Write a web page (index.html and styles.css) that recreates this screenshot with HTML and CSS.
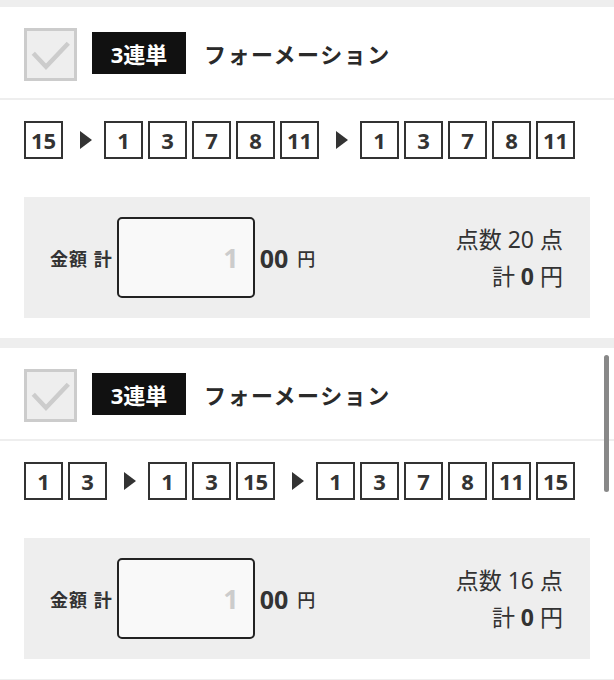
FILE: index.html
```html
<!DOCTYPE html>
<html lang="ja">
<head>
<meta charset="utf-8">
<title>3連単 フォーメーション</title>
<link rel="stylesheet" href="styles.css">
</head>
<body>
<div class="list">
  <section class="card">
    <div class="head">
      <span class="check"><svg viewBox="0 0 47 47" width="47" height="47"><polyline points="6.3,22.3 19,35.7 41.3,12.3" fill="none" stroke="#cccccc" stroke-width="4.5"/></svg></span>
      <span class="tag">3連単</span>
      <span class="kind">フォーメーション</span>
    </div>
    <div class="picks">
      <span class="num">15</span>
      <span class="arrow"></span>
      <span class="num">1</span><span class="num">3</span><span class="num">7</span><span class="num">8</span><span class="num">11</span>
      <span class="arrow"></span>
      <span class="num">1</span><span class="num">3</span><span class="num">7</span><span class="num">8</span><span class="num">11</span>
    </div>
    <div class="panel">
      <div class="amount">
        <span class="amount-label">金額 計</span>
        <span class="input">1</span>
        <span class="zeros">00</span>
        <span class="yen">円</span>
      </div>
      <div class="summary">
        <div>点数 20 点</div>
        <div>計 <b>0</b> 円</div>
      </div>
    </div>
  </section>
  <section class="card">
    <div class="head">
      <span class="check"><svg viewBox="0 0 47 47" width="47" height="47"><polyline points="6.3,22.3 19,35.7 41.3,12.3" fill="none" stroke="#cccccc" stroke-width="4.5"/></svg></span>
      <span class="tag">3連単</span>
      <span class="kind">フォーメーション</span>
    </div>
    <div class="picks">
      <span class="num">1</span><span class="num">3</span>
      <span class="arrow"></span>
      <span class="num">1</span><span class="num">3</span><span class="num">15</span>
      <span class="arrow"></span>
      <span class="num">1</span><span class="num">3</span><span class="num">7</span><span class="num">8</span><span class="num">11</span><span class="num">15</span>
    </div>
    <div class="panel">
      <div class="amount">
        <span class="amount-label">金額 計</span>
        <span class="input">1</span>
        <span class="zeros">00</span>
        <span class="yen">円</span>
      </div>
      <div class="summary">
        <div>点数 16 点</div>
        <div>計 <b>0</b> 円</div>
      </div>
    </div>
  </section>
</div>
<div class="scrollbar"></div>
</body>
</html>
```
FILE: styles.css
```css
html, body {
  margin: 0;
  padding: 0;
}
body {
  background: #eeeeee;
  font-family: "Noto Sans", "Noto Sans CJK JP", sans-serif;
  color: #333333;
  width: 614px;
  height: 680px;
  overflow: hidden;
  position: relative;
}
.list {
  padding-top: 7px;
  display: flex;
  flex-direction: column;
  gap: 10px;
}
.card {
  background: #ffffff;
  padding-bottom: 20px;
}
.head {
  height: 91px;
  border-bottom: 2px solid #eeeeee;
  display: flex;
  align-items: center;
  padding-left: 24px;
}
.check {
  width: 47px;
  height: 47px;
  border: 3px solid #cccccc;
  background: #eeeeee;
  display: block;
  margin-top: 3px;
}
.check svg {
  display: block;
}
.tag {
  margin-left: 15px;
  width: 94px;
  height: 42px;
  background: #111111;
  color: #ffffff;
  font-weight: 700;
  font-size: 22px;
  display: flex;
  align-items: center;
  justify-content: center;
}
.kind {
  margin-left: 18px;
  font-size: 22px;
  font-weight: 700;
  letter-spacing: 1.5px;
  color: #2a2a2a;
}
.picks {
  display: flex;
  align-items: center;
  gap: 5px;
  padding: 21px 24px 38px;
}
.num {
  box-sizing: border-box;
  width: 39px;
  height: 38px;
  border: 2px solid #333333;
  display: flex;
  align-items: center;
  justify-content: center;
  font-size: 22px;
  font-weight: 700;
  color: #333333;
}
.arrow {
  width: 0;
  height: 0;
  border-top: 9.5px solid transparent;
  border-bottom: 9.5px solid transparent;
  border-left: 12px solid #333333;
  margin: 0 7px 0 12px;
}
.panel {
  margin: 0 24px;
  height: 121px;
  background: #eeeeee;
  display: flex;
  align-items: center;
  justify-content: space-between;
  padding: 0 27px 0 26px;
}
.amount {
  display: flex;
  align-items: center;
}
.amount-label {
  font-size: 18px;
  font-weight: 700;
  letter-spacing: 1px;
  color: #333333;
}
.input {
  box-sizing: border-box;
  margin-left: 4px;
  width: 138px;
  height: 81px;
  border: 2px solid #222222;
  border-radius: 5px;
  background: #f9f9f9;
  display: flex;
  align-items: center;
  justify-content: flex-end;
  padding-right: 14px;
  font-size: 27px;
  font-weight: 700;
  color: #cccccc;
}
.zeros {
  margin-left: 5px;
  font-size: 25px;
  font-weight: 700;
  color: #333333;
}
.yen {
  margin-left: 9px;
  font-size: 18px;
  font-weight: 500;
  color: #333333;
}
.summary {
  text-align: right;
  font-size: 23px;
  font-weight: 400;
  line-height: 37px;
  color: #333333;
}
.summary b {
  font-weight: 700;
}
.scrollbar {
  position: absolute;
  left: 604px;
  top: 355px;
  width: 5px;
  height: 137px;
  border-radius: 3px;
  background: #888888;
}
```
